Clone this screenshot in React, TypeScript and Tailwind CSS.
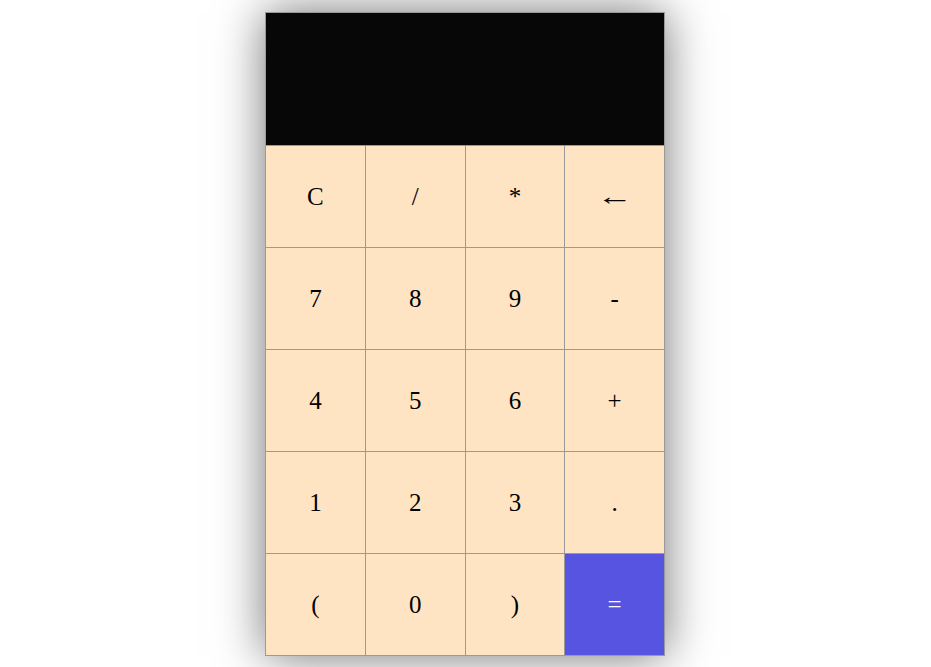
import React from 'react';

const KEYS = ['C', '/', '*', '←', '7', '8', '9', '-', '4', '5', '6', '+', '1', '2', '3', '.', '(', '0', ')', '='];

const App: React.FC = () => {
  return (
    <div className="min-h-screen bg-white pt-3 pr-px" style={{ fontFamily: '"Liberation Serif", "Times New Roman", serif' }}>
      <div className="mx-auto w-[400px] border-l border-t border-[#9a9a9a] shadow-[0_0_45px_rgba(0,0,0,0.55)]">
        <div className="h-[133px] bg-[#070707] border-r border-b border-[#9a9a9a]" />
        <div className="grid grid-cols-4">
          {KEYS.map((k) => (
            <button
              key={k}
              className={
                'h-[102px] border-r border-b border-[#9a9a9a] text-[25px] flex items-center justify-center ' +
                (k === '=' ? 'bg-[#5654e1] text-white' : 'bg-[#ffe4c4] text-black')
              }
            >
              {k === '←' ? <span className="inline-block scale-x-[1.45]">{k}</span> : k}
            </button>
          ))}
        </div>
      </div>
    </div>
  );
};

export default App;
